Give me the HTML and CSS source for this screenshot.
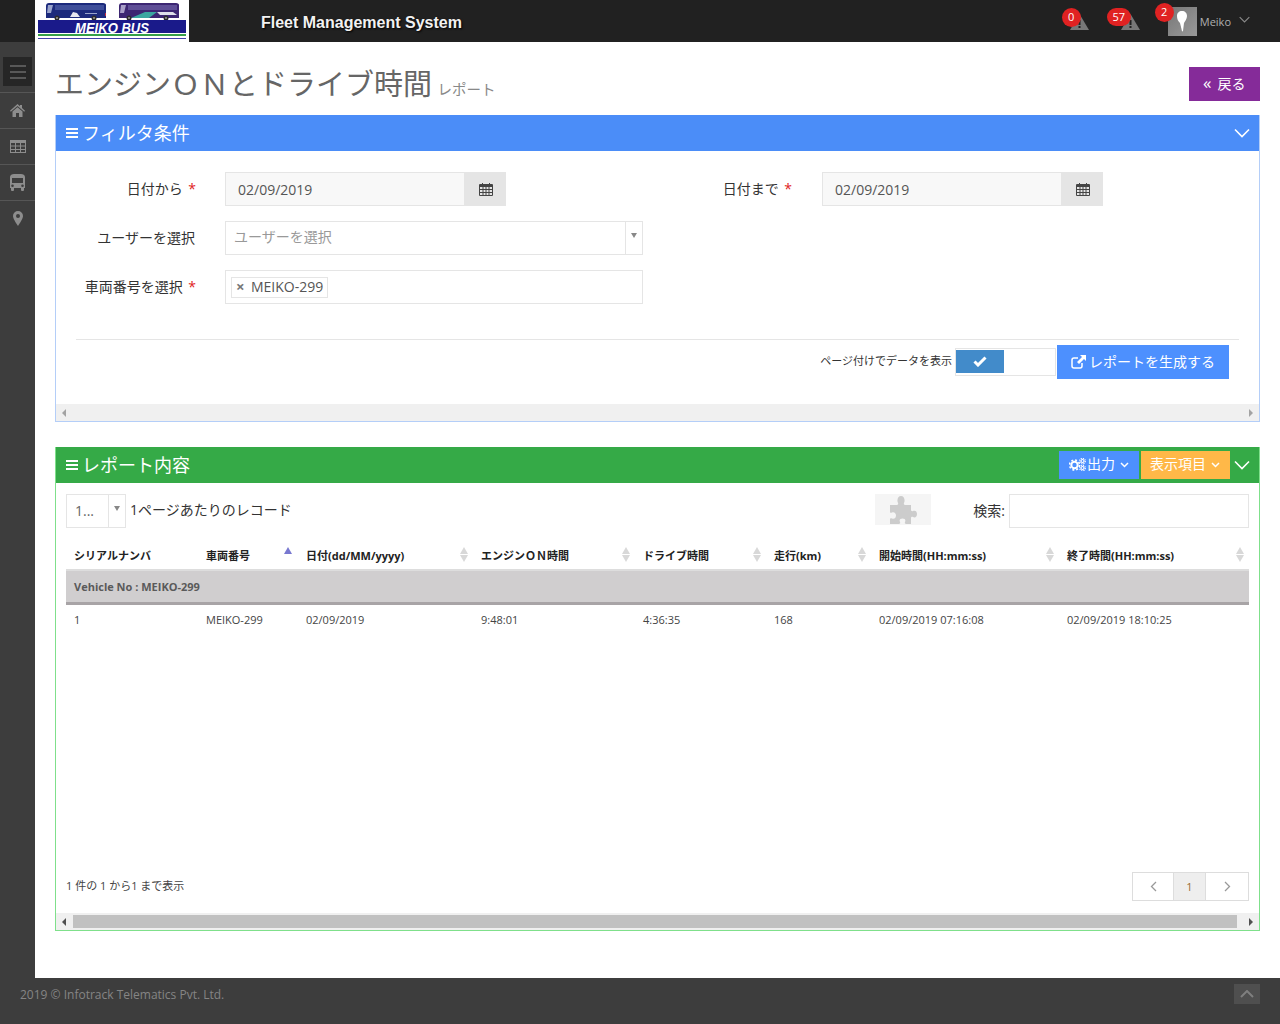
FILE: index.html
```html
<!DOCTYPE html>
<html lang="ja">
<head>
    <meta charset="UTF-8">
    <meta name="viewport" content="width=device-width, initial-scale=1.0">
    <title>Fleet Management System</title>
    <link rel="stylesheet" href="styles.css">
</head>
<body>
    <svg class="defs" width="0" height="0">
        <symbol id="i-cal" viewBox="0 0 14 14"><path fill-rule="evenodd" d="M1 2h2V1h1v1h6V1h1v1h2a1 1 0 0 1 1 1v10a1 1 0 0 1-1 1H1a1 1 0 0 1-1-1V3a1 1 0 0 1 1-1zm0 3v2h2.500V5zm3.500 0v2h2V5zm3 0v2h2V5zm3 0v2H13V5zM1 8v2h2.500V8zm3.500 0v2h2V8zm3 0v2h2V8zm3 0v2H13V8zM1 11v2h2.500v-2zm3.500 0v2h2v-2zm3 0v2h2v-2zm3 0v2H13v-2z"/></symbol>
        <symbol id="i-bars" viewBox="0 0 12 10"><path d="M0 0h12v2H0zM0 4h12v2H0zM0 8h12v2H0z"/></symbol>
        <symbol id="i-down" viewBox="0 0 16 10"><path d="M1 1.500l7 7 7-7" fill="none" stroke="currentColor" stroke-width="1.600"/></symbol>
        <symbol id="i-caret" viewBox="0 0 9 6"><path d="M1 1l3.500 3.500L8 1" fill="none" stroke="currentColor" stroke-width="1.500"/></symbol>
    </svg>

    <header class="topbar">
        <div class="logo">
            <svg width="154" height="42" viewBox="0 0 154 42">
                <path d="M11 18V6c0-2 1-3 3-3h54c2 0 3 1 3 2v13z" fill="#1c2a7c"/>
                <path d="M13 5h5l-2 8h-4z" fill="#9aa4cc"/>
                <rect x="20" y="5" width="49" height="5" fill="#3f4f9a"/>
                <path d="M35 17l3-5 4 1 3 4z" fill="#e6e6ee"/>
                <rect x="50" y="13" width="12" height="1" fill="#9aa4cc"/>
                <rect x="70" y="13" width="1" height="3" fill="#c83040"/>
                <circle cx="22" cy="18" r="2.500" fill="#2c2c2c"/><circle cx="22" cy="18" r="1" fill="#999"/>
                <circle cx="59" cy="18" r="2.500" fill="#2c2c2c"/><circle cx="59" cy="18" r="1" fill="#999"/>
                <path d="M84 18V6c0-2 1-3 3-3h54c2 0 3 1 3 2v13z" fill="#3c2672"/>
                <path d="M86 5h5l-2 8h-4z" fill="#a9a0c8"/>
                <rect x="93" y="5" width="49" height="5" fill="#5e4e96"/>
                <path d="M96 18l14-6h12l-8 6z" fill="#3aa6a0"/>
                <path d="M122 12h16l4 3h-17z" fill="#dfe0ea"/>
                <circle cx="94" cy="18" r="2.500" fill="#2c2c2c"/><circle cx="94" cy="18" r="1" fill="#999"/>
                <circle cx="131" cy="18" r="2.500" fill="#2c2c2c"/><circle cx="131" cy="18" r="1" fill="#999"/>
                <rect x="3" y="20" width="148" height="13" fill="#1a1a8a"/>
                <rect x="3" y="34" width="148" height="2" fill="#35a048"/>
                <rect x="3" y="38" width="148" height="1" fill="#4040a8"/>
                <text x="40" y="33" class="logo-text" textLength="74" lengthAdjust="spacingAndGlyphs">MEIKO BUS</text>
            </svg>
        </div>
        <div class="app-title">Fleet Management System</div>
        <div class="top-right">
            <div class="alert alert-one">
                <span class="badge">0</span>
                <svg class="warn" width="19" height="16" viewBox="0 0 19 16"><path fill-rule="evenodd" d="M9.500 0L19 16H0zM8.500 6v5h2V6zm0 6v2h2v-2z"/></svg>
            </div>
            <div class="alert alert-two">
                <span class="badge badge-wide">57</span>
                <svg class="warn" width="19" height="16" viewBox="0 0 19 16"><path fill-rule="evenodd" d="M9.500 0L19 16H0zM8.500 6v5h2V6zm0 6v2h2v-2z"/></svg>
            </div>
            <div class="user">
                <span class="badge badge-user">2</span>
                <div class="avatar">
                    <svg width="12" height="22" viewBox="0 0 12 22"><path d="M6 1c3 0 5 2 5 5 0 3-2 5-3 7l-1 8c-1 1-1 0-1.500-2L4 13C2 11 1 9 1 6c0-3 2-5 5-5z" fill="#fff"/></svg>
                </div>
                <span class="user-name">Meiko</span>
                <svg class="user-caret" width="11" height="7"><use href="#i-down"/></svg>
            </div>
        </div>
    </header>

    <div class="layout">
        <nav class="sidebar">
            <div class="side-toggle">
                <svg width="16" height="14" viewBox="0 0 16 14"><path d="M0 1h16M0 7h16M0 13h16" stroke="#8a8a8a" stroke-width="1"/></svg>
            </div>
            <a class="side-item"><svg width="15" height="13" viewBox="0 0 15 13"><path d="M7.500 0L10 2.200V1h2v3l3 2.800-.8.900L7.500 1.900.8 7.700 0 6.800zM2.500 7.500l5-4.200 5 4.200V13H9V9H6v4H2.500z"/></svg></a>
            <a class="side-item"><svg width="16" height="13" viewBox="0 0 16 13"><path fill-rule="evenodd" d="M0 0h16v13H0zm1 3v2.500h4V3zm5 0v2.500h4V3zm5 0v2.500h4V3zM1 6.500V9h4V6.500zm5 0V9h4V6.500zm5 0V9h4V6.500zM1 10v2h4v-2zm5 0v2h4v-2zm5 0v2h4v-2z"/></svg></a>
            <a class="side-item"><svg width="15" height="17" viewBox="0 0 15 17"><path fill-rule="evenodd" d="M4 0h7c2 0 4 1 4 3v11h-1v2a1 1 0 0 1-1 1h-1a1 1 0 0 1-1-1v-2H4v2a1 1 0 0 1-1 1H2a1 1 0 0 1-1-1v-2H0V3c0-2 2-3 4-3zM2 4v5h11V4zm.500 6.500a1.300 1.300 0 1 0 0 2.600 1.300 1.300 0 0 0 0-2.600zm10 0a1.300 1.300 0 1 0 0 2.600 1.300 1.300 0 0 0 0-2.600z"/></svg></a>
            <a class="side-item"><svg width="10" height="15" viewBox="0 0 10 15"><path fill-rule="evenodd" d="M5 0a5 5 0 0 1 5 5c0 2.500-3 7-5 10C3 12 0 7.500 0 5a5 5 0 0 1 5-5zm0 3a2 2 0 1 0 0 4 2 2 0 0 0 0-4z"/></svg></a>
        </nav>

        <main class="content">
            <div class="page-head">
                <h1 class="page-title">エンジンＯＮとドライブ時間 <small>レポート</small></h1>
                <a class="btn-back"><span class="dbl">«</span>戻る</a>
            </div>

            <section class="panel panel-blue">
                <div class="panel-title">
                    <svg class="title-bars" width="12" height="10"><use href="#i-bars"/></svg>
                    <span class="caption">フィルタ条件</span>
                    <svg class="collapse" width="16" height="10"><use href="#i-down"/></svg>
                </div>
                <div class="panel-body">
                    <div class="form-row">
                        <label class="form-label">日付から <i>*</i></label>
                        <div class="date-box">
                            <span class="date-value">02/09/2019</span>
                            <span class="date-btn"><svg width="14" height="14"><use href="#i-cal"/></svg></span>
                        </div>
                        <label class="form-label second">日付まで <i>*</i></label>
                        <div class="date-box">
                            <span class="date-value">02/09/2019</span>
                            <span class="date-btn"><svg width="14" height="14"><use href="#i-cal"/></svg></span>
                        </div>
                    </div>
                    <div class="form-row">
                        <label class="form-label no-star">ユーザーを選択</label>
                        <div class="select-box">
                            <span class="placeholder">ユーザーを選択</span>
                            <span class="select-arrow"></span>
                        </div>
                    </div>
                    <div class="form-row">
                        <label class="form-label">車両番号を選択 <i>*</i></label>
                        <div class="tags-box">
                            <span class="tag"><b>×</b>MEIKO-299</span>
                        </div>
                    </div>
                    <div class="form-actions">
                        <span class="switch-label">ページ付けでデータを表示</span>
                        <div class="switch">
                            <span class="switch-on"><svg width="14" height="11" viewBox="0 0 14 11"><path d="M1.500 5.500l3.500 3.500 7.500-7.500" fill="none" stroke="#fff" stroke-width="3"/></svg></span>
                        </div>
                        <a class="btn-generate">
                            <svg width="15" height="14" viewBox="0 0 15 14"><path d="M11 8v3a2 2 0 0 1-2 2H3a2 2 0 0 1-2-2V5a2 2 0 0 1 2-2h4" fill="none" stroke="#fff" stroke-width="1.500"/><path d="M9 0h6v6l-2-2-5 5-2-2 5-5z" fill="#fff"/></svg>
                            <span>レポートを生成する</span>
                        </a>
                    </div>
                </div>
                <div class="scrollbar">
                    <span class="arrow-left"></span>
                    <span class="arrow-right"></span>
                </div>
            </section>

            <section class="panel panel-green">
                <div class="panel-title">
                    <svg class="title-bars" width="12" height="10"><use href="#i-bars"/></svg>
                    <span class="caption">レポート内容</span>
                    <a class="tool-btn tool-blue">
                        <svg class="cogs" width="17" height="13" viewBox="0 0 17 13">
                            <circle cx="5.500" cy="7" r="3.200" fill="none" stroke="#fff" stroke-width="2"/>
                            <circle cx="5.500" cy="7" r="5" fill="none" stroke="#fff" stroke-width="1.500" stroke-dasharray="2 1.930"/>
                            <circle cx="13.500" cy="3" r="1.500" fill="none" stroke="#fff" stroke-width="1.200"/>
                            <circle cx="13.500" cy="3" r="2.800" fill="none" stroke="#fff" stroke-width="1.200" stroke-dasharray="1.200 1"/>
                            <circle cx="13.500" cy="10" r="1.500" fill="none" stroke="#fff" stroke-width="1.200"/>
                            <circle cx="13.500" cy="10" r="2.800" fill="none" stroke="#fff" stroke-width="1.200" stroke-dasharray="1.200 1"/>
                        </svg>
                        <span>出力</span>
                        <svg class="tool-caret" width="9" height="6"><use href="#i-caret"/></svg>
                    </a>
                    <a class="tool-btn tool-yellow">
                        <span>表示項目</span>
                        <svg class="tool-caret" width="9" height="6"><use href="#i-caret"/></svg>
                    </a>
                    <svg class="collapse green-collapse" width="16" height="10"><use href="#i-down"/></svg>
                </div>
                <div class="report-body">
                    <div class="table-tools">
                        <div class="page-size">
                            <span class="size-value">1...</span>
                            <span class="select-arrow"></span>
                        </div>
                        <span class="size-text">1ページあたりのレコード</span>
                        <div class="plugin">
                            <svg width="28" height="28" viewBox="0 0 28 28"><path d="M1 9h7c1 0 1.500-1 1-2C7.500 4 9 0 12 0s4.500 4 3 7c-.5 1 0 2 1 2h6v5c0 1 1 1.500 2 1 2-1 4 0 4 3s-2 4-4 3c-1-.5-2 0-2 1v6h-5c-1 0-1.500-1-1-2 1-2 0-3.500-2.500-3.500S10 24 11 26c.5 1 0 2-1 2H1v-5c0-1 1-1 2-.5 2 1 4-.5 4-3s-2-4-4-3c-1 .5-2 .5-2-.5z"/></svg>
                        </div>
                        <label class="search-label">検索:</label>
                        <div class="search-box"></div>
                    </div>
                    <table class="report-table">
                        <colgroup>
                            <col class="c1"><col class="c2"><col class="c3"><col class="c4"><col class="c5"><col class="c6"><col class="c7"><col class="c8">
                        </colgroup>
                        <thead>
                            <tr>
                                <th>シリアルナンバ</th>
                                <th class="sort-up">車両番号</th>
                                <th class="sortable">日付(dd/MM/yyyy)</th>
                                <th class="sortable">エンジンＯＮ時間</th>
                                <th class="sortable">ドライブ時間</th>
                                <th class="sortable">走行(km)</th>
                                <th class="sortable">開始時間(HH:mm:ss)</th>
                                <th class="sortable">終了時間(HH:mm:ss)</th>
                            </tr>
                        </thead>
                        <tbody>
                            <tr class="group-row"><td colspan="8">Vehicle No : MEIKO-299</td></tr>
                            <tr>
                                <td>1</td>
                                <td>MEIKO-299</td>
                                <td>02/09/2019</td>
                                <td>9:48:01</td>
                                <td>4:36:35</td>
                                <td>168</td>
                                <td>02/09/2019 07:16:08</td>
                                <td>02/09/2019 18:10:25</td>
                            </tr>
                        </tbody>
                    </table>
                    <div class="table-foot">
                        <span class="table-info">1 件の 1 から1 まで表示</span>
                        <div class="pager">
                            <a class="pager-prev"><svg width="7" height="11" viewBox="0 0 7 11"><path d="M6 1L1.500 5.500 6 10" fill="none" stroke="#999" stroke-width="1.300"/></svg></a>
                            <a class="pager-current">1</a>
                            <a class="pager-next"><svg width="7" height="11" viewBox="0 0 7 11"><path d="M1 1l4.500 4.500L1 10" fill="none" stroke="#999" stroke-width="1.300"/></svg></a>
                        </div>
                    </div>
                </div>
                <div class="scrollbar scrollbar-active">
                    <span class="arrow-left"></span>
                    <span class="thumb"></span>
                    <span class="arrow-right"></span>
                </div>
            </section>
        </main>
    </div>

    <footer class="footer">
        <span>2019 © Infotrack Telematics Pvt. Ltd.</span>
        <a class="go-top"><svg width="14" height="8" viewBox="0 0 14 8"><path d="M1 7l6-6 6 6" fill="none" stroke="#7f7f7f" stroke-width="2"/></svg></a>
    </footer>
</body>
</html>
```

FILE: styles.css
```css
* {
    box-sizing: border-box;
}
body {
    margin: 0;
    font-family: "Open Sans", "Noto Sans CJK JP", sans-serif;
    font-size: 14px;
    color: #333;
    background-color: #3d3d3d;
}
.defs {
    position: absolute;
}
a {
    color: inherit;
    text-decoration: none;
}

/* top bar */
.topbar {
    display: flex;
    align-items: stretch;
    height: 42px;
    background-color: #212121;
}
.logo {
    width: 154px;
    height: 42px;
    margin-left: 35px;
    background-color: #fff;
}
.logo svg {
    display: block;
}
.logo-text {
    font-family: "Liberation Sans", sans-serif;
    font-size: 15px;
    font-style: italic;
    font-weight: bold;
    fill: #fff;
}
.app-title {
    margin-left: 72px;
    font-family: "Liberation Sans", sans-serif;
    font-size: 16px;
    font-weight: bold;
    line-height: 46px;
    color: #f2f2f2;
    text-shadow: 1px 1px 2px #000;
}
.top-right {
    display: flex;
    margin-left: auto;
}
.alert {
    position: relative;
    width: 19px;
    height: 42px;
}
.alert-one {
    margin-right: 32px;
}
.alert-two {
    margin-right: 28px;
}
.warn {
    position: absolute;
    top: 14px;
    left: 0;
    fill: #777;
}
.badge {
    position: absolute;
    top: 8px;
    left: -8px;
    z-index: 1;
    min-width: 19px;
    height: 19px;
    border-radius: 10px;
    font-size: 11px;
    line-height: 18px;
    text-align: center;
    color: #fff;
    background-color: #e02222;
}
.badge-wide {
    left: -14px;
    top: 8px;
    width: 24px;
    height: 18px;
}
.user {
    position: relative;
    display: flex;
    align-items: center;
    height: 42px;
    padding-right: 30px;
}
.badge-user {
    top: 3px;
    left: -13px;
}
.avatar {
    display: flex;
    justify-content: center;
    align-items: center;
    width: 29px;
    height: 29px;
    background: linear-gradient(135deg, #777, #999);
}
.user-name {
    margin-left: 3px;
    font-size: 11px;
    color: #b0b0b0;
}
.user-caret {
    margin-left: 8px;
    margin-top: -3px;
    color: #8a8a8a;
}

/* sidebar */
.layout {
    display: flex;
    height: 936px;
}
.sidebar {
    flex: none;
    width: 35px;
    padding-top: 15px;
    background-color: #3d3d3d;
}
.side-toggle {
    display: flex;
    justify-content: center;
    align-items: center;
    width: 29px;
    height: 29px;
    margin: 0 0 6px 3px;
    background-color: #262626;
}
.side-item {
    display: flex;
    justify-content: center;
    align-items: center;
    height: 36px;
    border-top: 1px solid #565656;
    fill: #8d8d8d;
}

/* content */
.content {
    flex: 1;
    padding: 0 20px;
    background-color: #fff;
}
.page-head {
    display: flex;
    justify-content: space-between;
    align-items: flex-start;
    height: 73px;
    padding-top: 25px;
}
.page-title {
    margin: -5px 0 0;
    font-size: 29px;
    font-weight: 400;
    line-height: 44px;
    color: #666;
}
.page-title small {
    margin-left: -2px;
    font-size: 14.500px;
    font-weight: 400;
    color: #888;
}
.btn-back {
    width: 71px;
    height: 34px;
    padding-left: 14px;
    font-size: 14px;
    line-height: 34px;
    color: #fff;
    background-color: #852b99;
}
.dbl {
    margin-right: 6px;
    font-size: 17px;
    line-height: 30px;
}

/* panels */
.panel {
    border: 1px solid #b4cef8;
    border-top: 0;
}
.panel-green {
    margin-top: 25px;
    border-color: #7fe08b;
}
.panel-title {
    display: flex;
    align-items: center;
    height: 36px;
    padding: 0 9px 0 10px;
    color: #fff;
}
.panel-blue .panel-title {
    background-color: #4b8df8;
}
.panel-green .panel-title {
    background-color: #35aa47;
}
.title-bars {
    fill: #fff;
}
.caption {
    flex: 1;
    margin-left: 4px;
    margin-top: -2px;
    font-size: 18px;
}
.collapse {
    color: #fff;
}
.green-collapse {
    margin-left: 4px;
}
.tool-btn {
    display: flex;
    align-items: center;
    height: 28px;
    margin-top: -1px;
    font-size: 14px;
    color: #fff;
}
.tool-btn span {
    margin-top: -4px;
}
.tool-blue {
    width: 80px;
    padding-left: 10px;
    background-color: #4d90fe;
}
.tool-blue span {
    margin-left: 1px;
}
.tool-yellow {
    width: 89px;
    margin-left: 2px;
    padding-left: 9px;
    background-color: #ffb848;
}
.tool-caret {
    margin-left: 5px;
    color: #fff;
}

/* filter form */
.panel-body {
    height: 253px;
    padding-top: 21px;
    background-color: #fff;
}
.form-row {
    display: flex;
    height: 34px;
    margin-bottom: 15px;
}
.form-label {
    flex: none;
    width: 140px;
    font-size: 14px;
    line-height: 33px;
    text-align: right;
    color: #333;
}
.form-label i {
    margin-left: 2px;
    font-style: normal;
    color: #e02222;
}
.form-label.no-star {
    padding-right: 1px;
}
.form-label.second {
    margin-left: 146px;
    margin-right: 1px;
}
.date-box {
    display: flex;
    width: 281px;
    height: 34px;
    margin-left: 29px;
}
.date-value {
    flex: 1;
    padding: 0 12px;
    border: 1px solid #e5e5e5;
    border-right: 0;
    line-height: 33px;
    color: #555;
    background-color: #f8f8f8;
}
.date-btn {
    display: flex;
    justify-content: center;
    align-items: center;
    width: 42px;
    padding-left: 2px;
    fill: #444;
    background-color: #e5e5e5;
}
.select-box,
.tags-box {
    position: relative;
    width: 418px;
    height: 34px;
    margin-left: 29px;
    border: 1px solid #e5e5e5;
}
.placeholder {
    padding-left: 8px;
    line-height: 29px;
    color: #999;
}
.select-arrow {
    position: absolute;
    top: 0;
    right: 0;
    width: 17px;
    height: 100%;
    border-left: 1px solid #e5e5e5;
}
.select-arrow::after {
    content: "";
    position: absolute;
    top: 11px;
    left: 5px;
    border: 3.500px solid transparent;
    border-top: 5px solid #888;
}
.tags-box {
    padding: 6px 5px;
}
.tag {
    display: inline-block;
    height: 21px;
    padding: 0 4px;
    border: 1px solid #e5e5e5;
    line-height: 17px;
    color: #555;
}
.tag b {
    display: inline-block;
    width: 15px;
    font-size: 15px;
    color: #777;
}
.form-actions {
    display: flex;
    justify-content: flex-end;
    align-items: flex-start;
    margin: 35px 20px 0;
    padding: 5px 10px 0 0;
    border-top: 1px solid #e5e5e5;
}
.switch-label {
    margin-top: 7px;
    font-size: 11px;
    line-height: 18px;
    color: #333;
}
.switch {
    width: 101px;
    height: 28px;
    margin: 3px 1px 0 3px;
    padding: 1px 0;
    border: 1px solid #e5e5e5;
}
.switch-on {
    display: flex;
    justify-content: center;
    align-items: center;
    width: 48px;
    height: 23px;
    background-color: #428bca;
}
.btn-generate {
    display: flex;
    justify-content: center;
    align-items: center;
    gap: 3px;
    width: 172px;
    height: 34px;
    font-size: 14px;
    color: #fff;
    background-color: #4d90fe;
}
.btn-generate span {
    margin-top: -2px;
}
.scrollbar {
    position: relative;
    display: flex;
    justify-content: space-between;
    align-items: center;
    height: 17px;
    padding: 0 6px;
    background-color: #f0f0f0;
}
.arrow-left {
    border: 4px solid transparent;
    border-left: 0;
    border-right: 4px solid #a3a3a3;
}
.arrow-right {
    border: 4px solid transparent;
    border-right: 0;
    border-left: 4px solid #a3a3a3;
}
.scrollbar-active .arrow-left {
    border-right-color: #505050;
}
.scrollbar-active .arrow-right {
    border-left-color: #505050;
}
.thumb {
    flex: 1;
    height: 13px;
    margin: 0 12px 0 7px;
    background-color: #c1c1c1;
}

/* report */
.report-body {
    height: 430px;
    padding: 11px 10px 0;
}
.table-tools {
    display: flex;
    align-items: center;
    height: 34px;
}
.page-size {
    position: relative;
    width: 60px;
    height: 34px;
    border: 1px solid #e5e5e5;
    padding-left: 8px;
    line-height: 31px;
    color: #666;
}
.size-text {
    margin-left: 4px;
    margin-top: -5px;
    font-size: 14px;
}
.plugin {
    display: flex;
    justify-content: center;
    align-items: center;
    width: 56px;
    height: 31px;
    margin: -3px 0 0 auto;
    fill: #ccc;
    background-color: #f5f5f5;
}
.search-label {
    margin-left: 42px;
    margin-right: 4px;
    margin-top: -3px;
    font-size: 14px;
}
.search-box {
    width: 240px;
    height: 34px;
    border: 1px solid #e5e5e5;
}
.report-table {
    width: 100%;
    margin-top: 12px;
    border-collapse: collapse;
    table-layout: fixed;
    font-size: 11px;
}
.c1 { width: 132px; }
.c2 { width: 100px; }
.c3 { width: 175px; }
.c4 { width: 162px; }
.c5 { width: 131px; }
.c6 { width: 105px; }
.c7 { width: 188px; }
.c8 { width: 190px; }
.report-table th {
    position: relative;
    height: 30px;
    padding: 0 8px;
    border-bottom: 2px solid #ddd;
    font-weight: bold;
    text-align: left;
    white-space: nowrap;
    color: #222;
}
.report-table td {
    height: 33px;
    padding: 0 8px;
    color: #444;
}
.group-row td {
    height: 33px;
    border-bottom: 3px solid #a8a4a6;
    font-weight: 700;
    color: #5a5a5a;
    background-color: #d0cecf;
}
.report-table tbody tr:last-child td {
    height: 32px;
}
.sortable::before,
.sortable::after,
.sort-up::before {
    content: "";
    position: absolute;
    right: 5px;
    border: 4.500px solid transparent;
}
.sortable::before,
.sort-up::before {
    top: 7px;
    border-top: 0;
    border-bottom: 7px solid #d8d8d8;
}
.sortable::after {
    top: 15px;
    border-bottom: 0;
    border-top: 7px solid #d8d8d8;
}
.sort-up::before {
    right: 6px;
    border-bottom-color: #7878d0;
}
.table-foot {
    display: flex;
    justify-content: space-between;
    align-items: flex-start;
    margin-top: 237px;
}
.table-info {
    margin-top: 4px;
    font-size: 11px;
    line-height: 20px;
    color: #444;
}
.pager {
    display: flex;
    height: 29px;
    border: 1px solid #ddd;
}
.pager a {
    display: flex;
    justify-content: center;
    align-items: center;
}
.pager-prev {
    width: 41px;
    border-right: 1px solid #ddd;
}
.pager-current {
    width: 32px;
    font-size: 11px;
    color: #996c33;
    background-color: #eee;
    border-right: 1px solid #ddd;
}
.pager-next {
    width: 42px;
}

/* footer */
.footer {
    display: flex;
    justify-content: space-between;
    height: 46px;
    padding: 7px 20px 0;
    font-size: 12px;
    line-height: 20px;
    color: #858585;
    background-color: #3d3d3d;
}
.go-top {
    display: flex;
    justify-content: center;
    align-items: center;
    width: 26px;
    height: 20px;
    margin-top: -1px;
    background-color: #4f4f4f;
}
```
